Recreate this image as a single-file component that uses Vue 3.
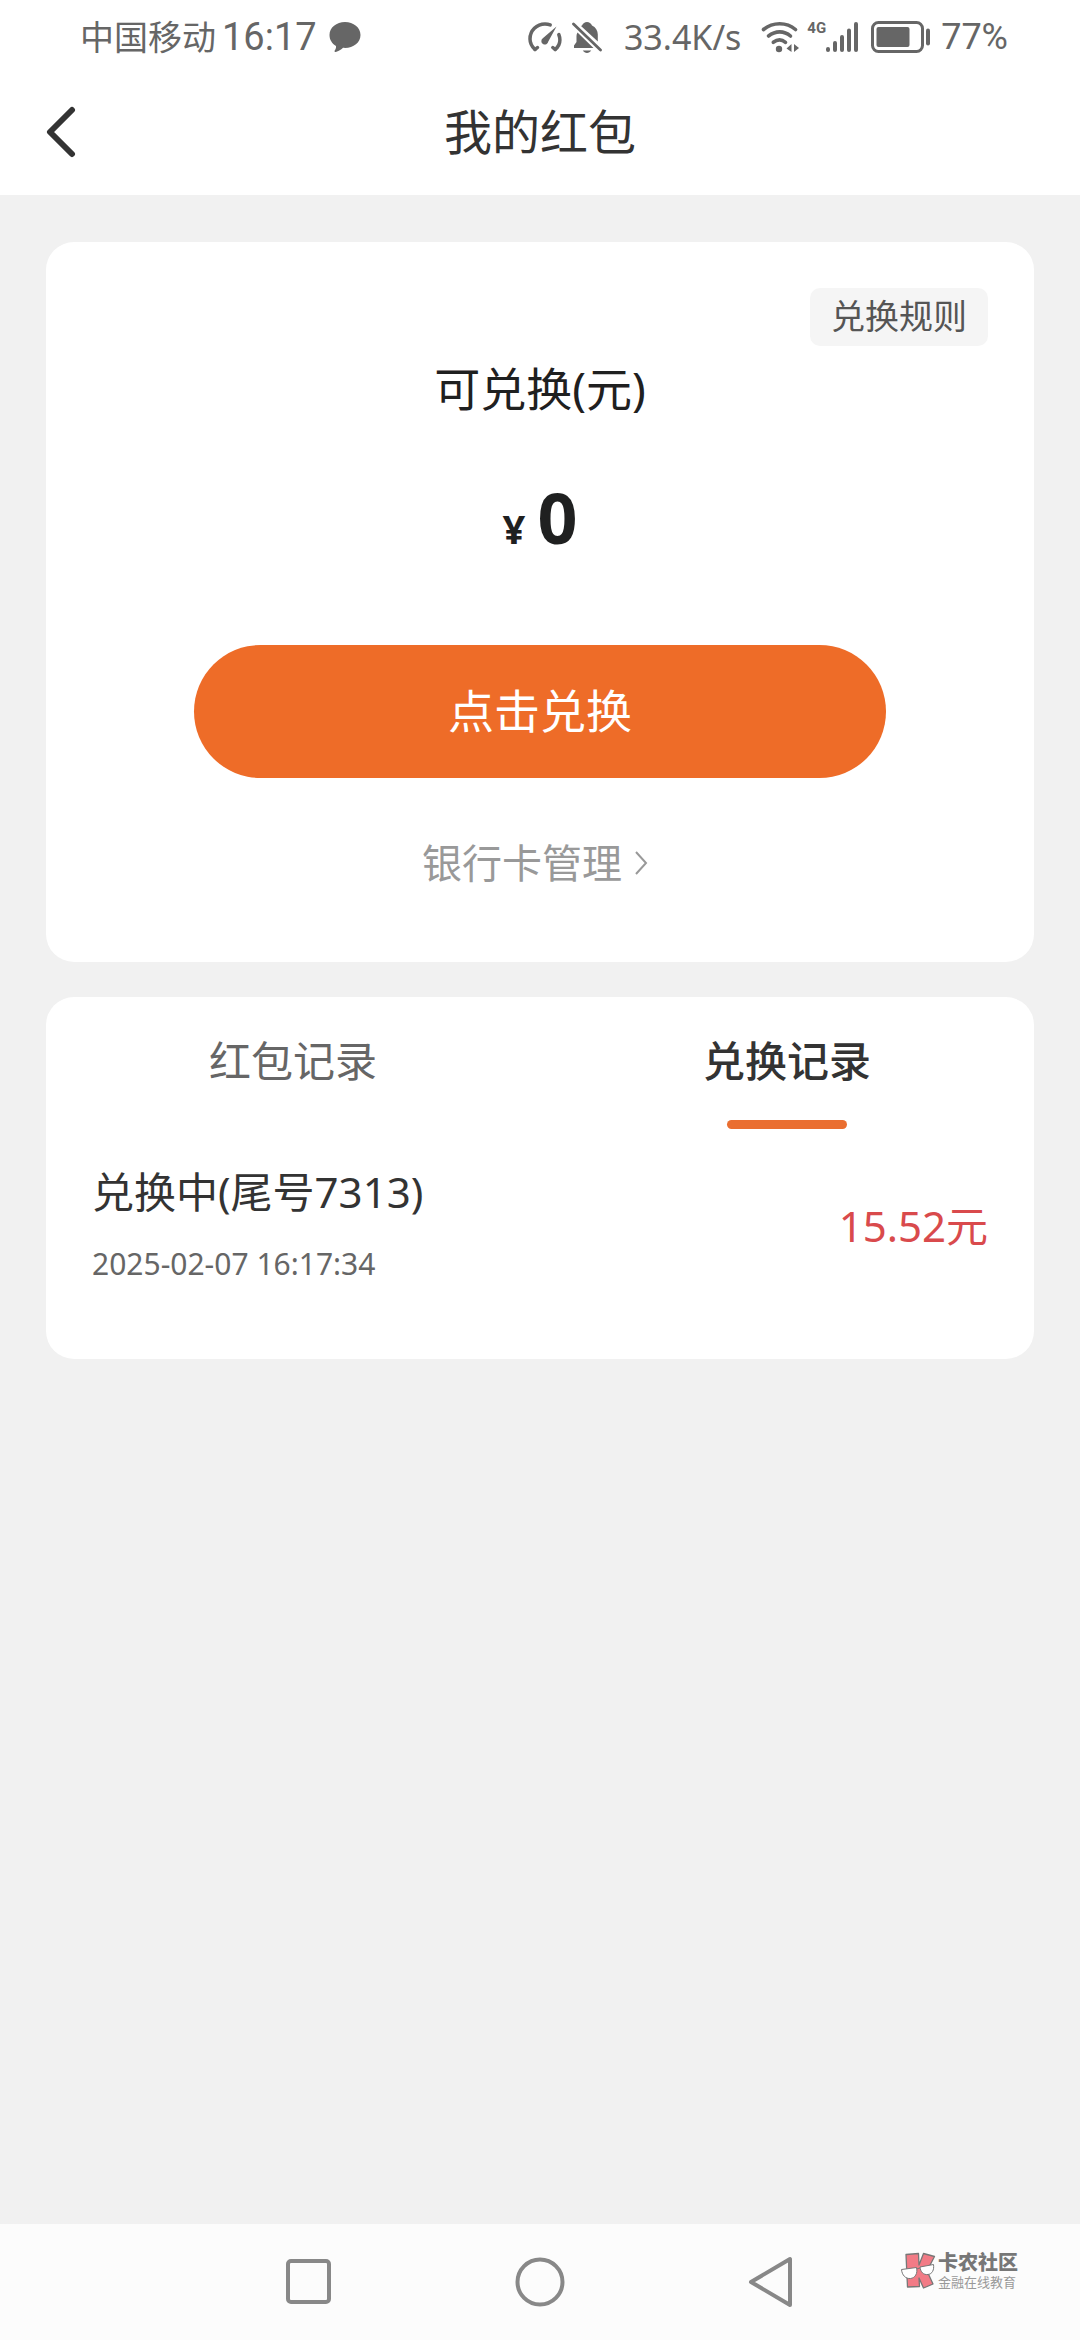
<script setup>
import { ref } from 'vue'

const tabs = [
  { key: 'packet', label: '红包记录' },
  { key: 'exchange', label: '兑换记录' },
]
const active = ref('exchange')

const records = {
  packet: [],
  exchange: [
    { title: '兑换中(尾号7313)', time: '2025-02-07 16:17:34', amount: '15.52元' },
  ],
}
</script>

<template>
  <div class="page">
    <div class="status">
      <div class="status-left">
        <span class="carrier">中国移动</span>
        <span class="clock">16:17</span>
        <svg class="bubble" width="32" height="32" viewBox="0 0 32 32">
          <path d="M16 1C7.500 1 .5 6.500 .5 14c0 4.800 2.500 8.500 6.500 11 .3 2-.6 3.700-1.600 5 .1 1 1 1.200 2 .8 2.800-.9 5-2.300 6.600-4 .7.100 1.300.100 2 .100C24.500 26.900 31.500 21.500 31.500 14S24.500 1 16 1z" fill="#666" />
        </svg>
      </div>
      <div class="status-right">
        <svg width="34" height="32" viewBox="0 0 34 32" fill="none" stroke="#666" stroke-width="3.500" stroke-linecap="round">
          <path d="M7 28.500C3.800 25.500 2 21.800 2 18 2 9.600 8.700 3 17 3c1.800 0 3.600.3 5.200.9" />
          <path d="M30.800 13.500c.8 2 1.100 4 1.100 5.500 0 3.600-1.700 7-4.700 9.500" />
          <path d="M7 28.500l2.500-2M27.200 28.500l-2.400-2" />
          <path d="M28.500 5.500L20.300 20.500a3.500 3.500 0 1 1-5.500-3.300z" fill="#666" stroke="none" />
        </svg>
        <svg class="bell" width="30" height="32" viewBox="0 0 30 32" fill="#666">
          <path d="M5.500 11.500L21.500 27H2v-2.500l2.500-3.500V15c0-1.300.3-2.500 1-3.500z" />
          <path d="M10 4.500C11 2.500 12.800 1 15 1s4 1.500 5 3.500c3.700 1.800 5.800 5 5.800 9v7L9 5z" />
          <path d="M10.800 29.500h8.400c-1 1.600-2.500 2.500-4.200 2.500s-3.200-.9-4.200-2.500z" />
          <path d="M1.500 3L28.500 29" stroke="#666" stroke-width="2.800" stroke-linecap="round" />
        </svg>
        <span class="speed">33.4K/s</span>
        <svg class="wifi" width="40" height="32" viewBox="0 0 40 32" fill="none" stroke="#666" stroke-width="3.600" stroke-linecap="round">
          <path d="M2.500 8.500C12 .8 25.500 .8 34.500 8.500" />
          <path d="M7.500 15C14.500 9.500 23 9.500 29.500 15" />
          <path d="M12.300 21.300c4-3 8.500-3 12.200 0" />
          <circle cx="18" cy="28" r="3.200" fill="#666" stroke="none" />
          <path d="M30.500 23v8l-5-3.500zM33 31v-8l5 4z" fill="#666" stroke="none" />
        </svg>
        <span class="net">4G</span>
        <svg class="signal" width="33" height="32" viewBox="0 0 33 32" stroke="#666" stroke-width="4" stroke-linecap="round">
          <path d="M2 28v1M9 22v7M16 16v13M23 9.500V29M30 3v26" />
        </svg>
        <svg class="battery" width="60" height="32" viewBox="0 0 60 32" fill="none">
          <rect x="1.500" y="1.500" width="50" height="29" rx="6" stroke="#666" stroke-width="3" />
          <rect x="5.500" y="6" width="33" height="20" rx="2" fill="#666" />
          <path d="M57 9.500v13" stroke="#666" stroke-width="4" stroke-linecap="round" />
        </svg>
        <span class="percent">77%</span>
      </div>
    </div>

    <header class="bar">
      <button class="back" type="button" aria-label="返回">
        <svg width="30" height="52" viewBox="0 0 30 52" fill="none">
          <path d="M26 4L4 26l22 22" stroke="#333" stroke-width="6" stroke-linecap="round" stroke-linejoin="round" />
        </svg>
      </button>
      <h1>我的红包</h1>
    </header>

    <main>
      <section class="card balance">
        <button class="rules" type="button">兑换规则</button>
        <h2>可兑换(元)</h2>
        <p class="money"><span class="yen">¥</span><span>0</span></p>
        <button class="redeem" type="button">点击兑换</button>
        <a class="bank" href="#bank">
          银行卡管理
          <svg width="14" height="26" viewBox="0 0 14 26" fill="none">
            <path d="M2 2l10 11L2 24" stroke="#999" stroke-width="2" />
          </svg>
        </a>
      </section>

      <section class="card">
        <div class="tabs" role="tablist">
          <button
            v-for="t in tabs"
            :key="t.key"
            type="button"
            role="tab"
            :aria-selected="active === t.key"
            :class="['tab', { on: active === t.key }]"
            @click="active = t.key"
          >
            {{ t.label }}
          </button>
        </div>
        <ul class="list">
          <li v-for="r in records[active]" :key="r.time">
            <div>
              <p class="name">{{ r.title }}</p>
              <time>{{ r.time }}</time>
            </div>
            <span class="sum">{{ r.amount }}</span>
          </li>
        </ul>
      </section>
    </main>

    <nav class="keys">
      <button type="button" aria-label="最近任务">
        <svg width="52" height="52" viewBox="0 0 52 52" fill="none" stroke="#888" stroke-width="4">
          <rect x="5" y="5" width="41" height="41" rx="3" />
        </svg>
      </button>
      <button type="button" aria-label="主页">
        <svg width="52" height="52" viewBox="0 0 52 52" fill="none" stroke="#888" stroke-width="4">
          <circle cx="26" cy="26" r="22.500" />
        </svg>
      </button>
      <button type="button" aria-label="返回上一级">
        <svg width="52" height="52" viewBox="0 0 52 52" fill="none" stroke="#888" stroke-width="4" stroke-linejoin="round">
          <path d="M6 26L45 3v46z" />
        </svg>
      </button>
      <div class="brand">
        <svg width="36" height="38" viewBox="0 0 36 38">
          <g fill="#f27b86" stroke="#777" stroke-width="1.300" stroke-linejoin="round">
            <path d="M6 2.500L18.500 1.500 19 13 23.500 1.500l11 3L27 19l6 13-9.500 4-4.500-10 .5 8.500-12 .5z" />
          </g>
          <path d="M1.500 17.500l15-2c1.500 6-1.500 10.500-6 11-5 .5-8.500-3.500-9-9z" fill="#fff" stroke="#777" />
          <path d="M20 15l13.500-2.500c.8 5.500-1.300 9.500-5.500 10-4.500.6-7.500-2.500-8-7.500z" fill="#fff" stroke="#777" />
          <path d="M16.500 17l3.500-1" stroke="#777" />
        </svg>
        <div>
          <strong>卡农社区</strong>
          <small>金融在线教育</small>
        </div>
      </div>
    </nav>
  </div>
</template>

<style>
body {
  margin: 0;
  background: #f1f1f1;
}
</style>

<style scoped>
.page {
  display: flex;
  flex-direction: column;
  min-height: 100vh;
  color: #333;
  font-family: "Noto Sans", "Noto Sans CJK SC", sans-serif;
}

button {
  padding: 0;
  border: 0;
  background: none;
  color: inherit;
  font: inherit;
  cursor: pointer;
}

svg {
  display: block;
  flex: none;
}

h1, h2, p, ul {
  margin: 0;
  padding: 0;
  font-weight: 400;
}

.status {
  display: flex;
  justify-content: space-between;
  height: 74px;
  padding: 0 72px 0 80px;
  background: #fff;
  color: #666;
}

.status-left,
.status-right {
  display: flex;
  align-items: center;
}

.carrier {
  font-size: 34px;
  line-height: 40px;
}

.clock {
  margin: 0 12px 0 6px;
  font: 38px Roboto, sans-serif;
}

.bell {
  margin: 0 22px 0 10px;
}

.speed {
  font-size: 34px;
  line-height: 40px;
}

.wifi {
  margin: 0 6px 0 20px;
}

.net {
  align-self: flex-start;
  margin-top: 18px;
  font: bold 15px/20px Roboto, sans-serif;
}

.battery {
  margin: 0 10px 0 12px;
}

.percent {
  font: 36px Roboto, sans-serif;
}

.bar {
  display: grid;
  box-sizing: border-box;
  grid-template-columns: 1fr auto 1fr;
  align-items: center;
  height: 121px;
  padding: 0 46px 6px;
  background: #fff;
}

.back {
  justify-self: start;
}

.bar h1 {
  font-size: 48px;
  line-height: 64px;
}

main {
  display: flex;
  flex: 1;
  flex-direction: column;
  gap: 35px;
  padding: 47px 46px;
}

.card {
  border-radius: 28px;
  background: #fff;
}

.balance {
  display: flex;
  flex-direction: column;
  align-items: center;
  padding: 46px 46px 71px;
}

.rules {
  align-self: flex-end;
  padding: 0 21px 2px;
  border-radius: 10px;
  background: #f5f5f5;
  color: #555;
  font-size: 34px;
  line-height: 56px;
}

.balance h2 {
  margin-top: 10px;
  color: #1f2020;
  font-size: 46px;
  line-height: 64px;
}

.money {
  display: flex;
  align-items: baseline;
  gap: 12px;
  margin: 49px 0 68px;
  color: #1f2020;
  font-size: 70px;
  font-weight: 700;
  line-height: 96px;
}

.yen {
  font-size: 40px;
}

.redeem {
  align-self: stretch;
  height: 133px;
  margin: 0 102px;
  padding-bottom: 8px;
  border-radius: 67px;
  background: #ee6c28;
  color: #fff;
  font-size: 46px;
}

.bank {
  display: flex;
  align-items: center;
  gap: 12px;
  margin-top: 57px;
  padding-right: 10px;
  color: #999;
  font-size: 40px;
  line-height: 56px;
  text-decoration: none;
}

.tabs {
  display: grid;
  grid-template-columns: 1fr 1fr;
}

.tab {
  display: flex;
  flex-direction: column;
  align-items: center;
  gap: 27px;
  padding-top: 32px;
  color: #666;
  font-size: 42px;
  line-height: 64px;
}

.tab::after {
  width: 120px;
  height: 9px;
  border-radius: 5px;
  content: "";
}

.tab.on {
  color: #333;
  font-weight: 500;
}

.tab.on::after {
  background: #ea6e30;
}

.list {
  padding: 35px 46px 71px;
  list-style: none;
}

.list li {
  display: flex;
  align-items: center;
  justify-content: space-between;
}

.name {
  margin-bottom: 20px;
  font-size: 42px;
  line-height: 56px;
}

time {
  display: block;
  color: #666;
  font-size: 30px;
  line-height: 48px;
}

.sum {
  color: #d94a4c;
  font-size: 42px;
  line-height: 56px;
}

.keys {
  position: relative;
  display: flex;
  align-items: center;
  justify-content: center;
  gap: 179px;
  height: 116px;
  background: #fcfcfc;
}

.brand {
  position: absolute;
  top: 28px;
  right: 62px;
  display: flex;
  align-items: center;
  gap: 2px;
  color: #777;
}

.brand strong,
.brand small {
  display: block;
}

.brand strong {
  font-size: 20px;
  font-weight: 900;
  line-height: 22px;
}

.brand small {
  color: #999;
  font-size: 13px;
  line-height: 16px;
}
</style>
